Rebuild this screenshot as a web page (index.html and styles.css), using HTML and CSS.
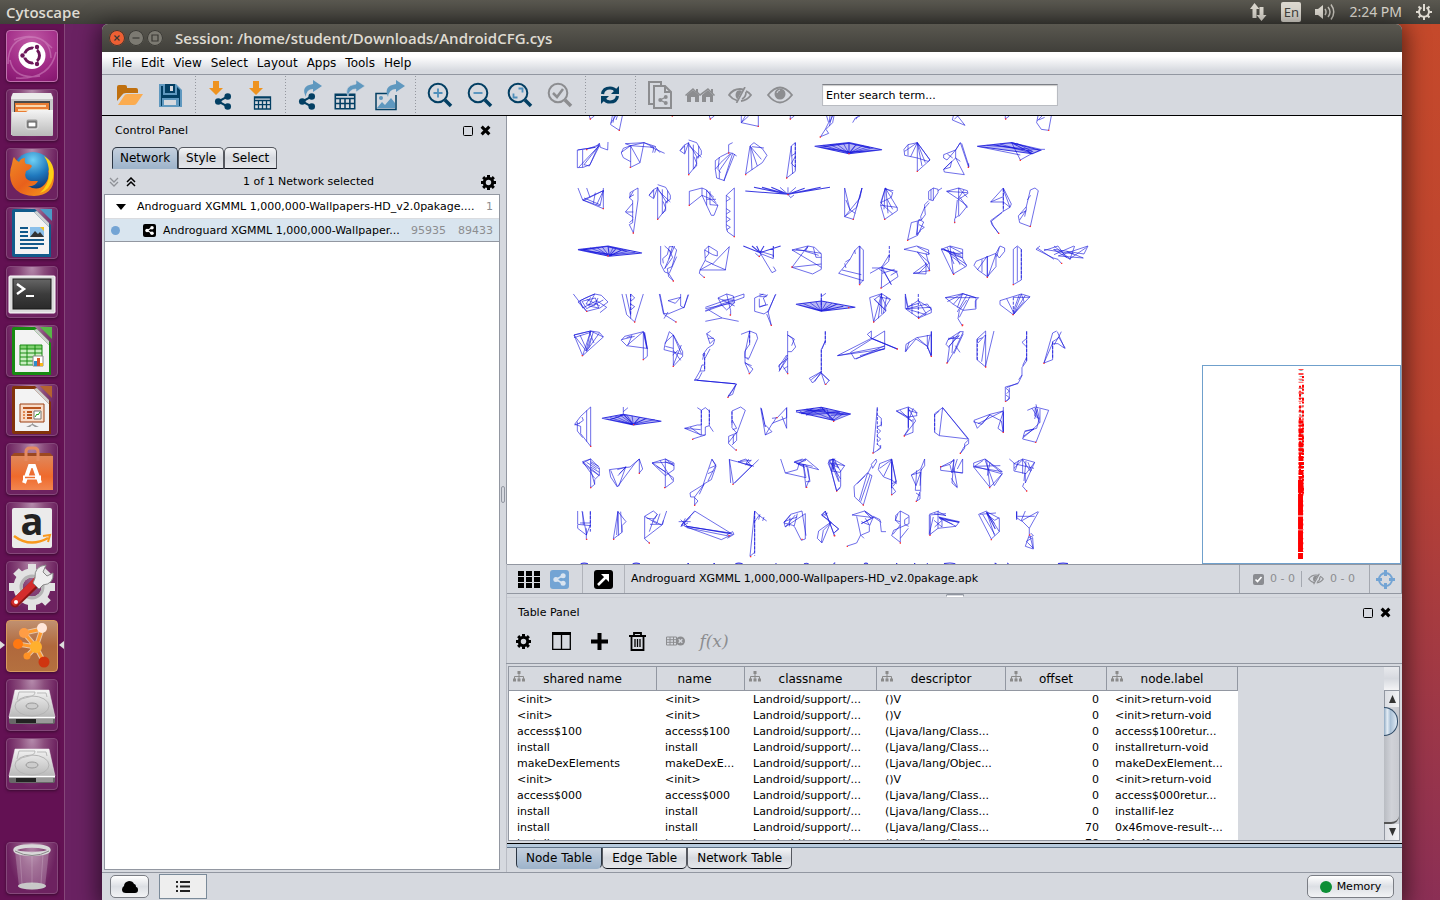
FILE: index.html
```html
<!DOCTYPE html>
<html lang="en">
<head>
<meta charset="utf-8">
<title>Cytoscape</title>
<link rel="stylesheet" href="styles.css">
</head>
<body>
<svg class="defs" aria-hidden="true">
  <defs>
    <linearGradient id="metal" x1="0" y1="0" x2="0" y2="1"><stop offset="0" stop-color="#f4f4f4"/><stop offset="1" stop-color="#b9b9b9"/></linearGradient>
    <linearGradient id="dark" x1="0" y1="0" x2="0" y2="1"><stop offset="0" stop-color="#666"/><stop offset=".5" stop-color="#3c3c3c"/><stop offset="1" stop-color="#2a2a2a"/></linearGradient>
    <radialGradient id="globe" cx=".5" cy=".2" r=".8"><stop offset="0" stop-color="#6fd0f5"/><stop offset=".5" stop-color="#1f78bd"/><stop offset="1" stop-color="#0c2a66"/></radialGradient>
    <linearGradient id="fox" x1="0" y1="0" x2="1" y2="1"><stop offset="0" stop-color="#f08a24"/><stop offset=".5" stop-color="#e8601c"/><stop offset="1" stop-color="#f9a11b"/></linearGradient>
    <linearGradient id="bag" x1="0" y1="0" x2="0" y2="1"><stop offset="0" stop-color="#e0875a"/><stop offset=".6" stop-color="#ef6a2c"/><stop offset="1" stop-color="#f28650"/></linearGradient>
    <symbol id="share" viewBox="0 0 18 18"><path d="M14 3.500L4 9l10 5.500" fill="none" stroke="currentColor" stroke-width="2.200"/><circle cx="14" cy="3.700" r="3.500" fill="currentColor"/><circle cx="4" cy="9" r="3.500" fill="currentColor"/><circle cx="14" cy="14.300" r="3.500" fill="currentColor"/></symbol>
    <symbol id="gear" viewBox="0 0 16 16"><path d="M8 3.500a4.500 4.500 0 1 0 0 9a4.500 4.500 0 1 0 0-9z" fill="none" stroke="currentColor" stroke-width="3.200"/><path d="M8 0v3M8 13v3M0 8h3M13 8h3M2.300 2.300l2.200 2.200M11.500 11.500l2.200 2.200M2.300 13.700l2.200-2.200M11.500 4.500l2.200-2.200" stroke="currentColor" stroke-width="3.200"/></symbol>
    <symbol id="sheet" viewBox="0 0 18 14"><path d="M1 1h16v12H1zM1 4.500h16M1 8.700h16M5 4v9M9 4v9M13 4v9" fill="none" stroke="currentColor" stroke-width="1.300"/><path d="M1 1h16v1.500H1z" fill="currentColor"/></symbol>
    <symbol id="tree" viewBox="0 0 12 11"><path d="M6 2v6M1.500 9V5.500h9V9" fill="none" stroke="#8a8a8a"/><path d="M4.500 0h3v3h-3zM0 7.500h3v3H0zM4.500 7.500h3v3h-3zM9 7.500h3v3H9z" fill="#8a8a8a"/></symbol>
    <symbol id="float" viewBox="0 0 12 12"><rect x="1.500" y="1.500" width="9" height="9" rx="1" fill="none" stroke="#000"/></symbol>
    <symbol id="close" viewBox="0 0 10 10"><path d="M1.500 1.500l7 7M8.500 1.500l-7 7" stroke="#000" stroke-width="2.800"/></symbol>
    <symbol id="eyeoff" viewBox="0 0 24 16"><path d="M9 13.500Q4 12 1 8Q5 2 12 2q2 0 3.500.5M18 4q3 1.500 5 4q-4 5.500-10 6" fill="none" stroke="currentColor" stroke-width="1.800"/><path d="M9 12Q6 8 9 4q3-1.500 5 0L9.500 12z" fill="currentColor"/><path d="M17 0L8.500 16M18 5q0 5-4 7" fill="none" stroke="currentColor" stroke-width="1.700"/></symbol>
    <symbol id="drive" viewBox="0 0 52 52"><path d="M9 11h34l6 27H3z" fill="url(#metal)" stroke="#eee" stroke-width=".5"/><path d="M3 38h46v5q0 2-2 2H5q-2 0-2-2z" fill="#686868"/><path d="M3 38h46v1.500H3z" fill="#fff"/><path d="M10 40h20v4H10z" fill="#222"/><path d="M30 40h17v4H30z" fill="#999"/><ellipse cx="26" cy="27" rx="17" ry="10" fill="none" stroke="#b4b4b4"/><ellipse cx="26" cy="27" rx="6" ry="3" fill="#ccc" stroke="#999"/><path d="M11 21l2-8h16q0 4-6 5q-8 1-12 5M31 14h9l1 4" fill="none" stroke="#b9b9b9"/></symbol>
  </defs>
</svg>

<header class="topbar">
  <span class="app-name">Cytoscape</span>
  <div class="indicators">
    <svg width="18" height="18" viewBox="0 0 18 18"><path d="M5.500 0l5 6H7.500v9h-4V6H1zM12.500 18l-5-6h3V4h4v8h3z" fill="#dfdbd2"/></svg>
    <span class="lang">En</span>
    <svg width="20" height="18" viewBox="0 0 20 18"><path d="M0 6h3l5-4v14l-5-4H0z" fill="#dfdbd2"/><path d="M10 6q2 3 0 6M13 4q4 5 0 10M16 1.500q5.500 7.500 0 15" fill="none" stroke="#c5c2ba" stroke-width="1.500"/></svg>
    <time>2:24 PM</time>
    <svg width="16" height="16" viewBox="0 0 16 16"><path d="M5.500 3.500a5 5 0 1 0 5 0" fill="none" stroke="#dfdbd2" stroke-width="2"/><path d="M8 0v7M0 8h3M13 8h3M8 13v3M2.500 2.500l2 2M13.500 2.500l-2 2M2.500 13.500l2-2M13.500 13.500l-2-2" stroke="#dfdbd2" stroke-width="2"/></svg>
  </div>
</header>

<div class="desktop">
<nav class="launcher" aria-label="Launcher">
  <button class="tile dash" aria-label="Dash"><svg viewBox="0 0 52 52"><path d="M2 34Q2 8 26 7Q44 8 45 28M10 48Q44 50 50 22M8 10Q30 0 46 18M4 30Q8 50 34 46" fill="none" stroke="#d58fc5" stroke-opacity=".5" stroke-width="1.500"/><circle cx="26" cy="25.500" r="13.500" fill="#fff"/><circle cx="26" cy="25.500" r="7.500" fill="none" stroke="#6c1659" stroke-width="3"/><path d="M15 25.500h6M31 16l-3 5M31 35l-3-5" stroke="#fff" stroke-width="4"/><g fill="#6c1659"><circle cx="16.500" cy="25.500" r="2.200"/><circle cx="31" cy="17" r="2.200"/><circle cx="31" cy="34" r="2.200"/></g></svg></button>
  <button class="tile" aria-label="Files"><svg viewBox="0 0 52 52"><path d="M7 4h38l2 4v38H5V8z" fill="#c9c9c9"/><path d="M7 4h38l2 6H5z" fill="#ececec"/><path d="M8 12h36v12H8z" fill="#4a4a4a"/><path d="M9 14h34v10H9z" fill="#e97d33"/><path d="M10 16h30v2H10zM12 20h30v2H12z" fill="#f9d7ae"/><path d="M6 23h14l3-2h24v25q0 1-1 1H7q-1 0-1-1z" fill="url(#metal)"/><rect x="20" y="30" width="12" height="10" rx="2" fill="#999" stroke="#e5e5e5"/><rect x="22" y="33" width="8" height="5" fill="#fff" stroke="#555"/></svg></button>
  <button class="tile" aria-label="Firefox"><svg viewBox="0 0 52 52"><circle cx="27" cy="24" r="20" fill="url(#globe)"/><path d="M6 16q1-6 2-7q2 4 5 5q2-4 6-4q-1 4 1 6q5 0 6 2q-2 4-6 5q-3 8 5 10q5 0 7 0q-3 6-10 5q10 6 17-2q5-6 3-14q3 2 3 5q1-10-4-14q8 5 7 16q0 18-20 19Q5 47 4 27q0-6 2-11z" fill="url(#fox)"/><path d="M38 8q12 7 9 22q-3 12-13 15q9-8 9-20q0-10-5-17z" fill="#fcd116"/></svg></button>
  <button class="tile" aria-label="Writer"><svg viewBox="0 0 52 52"><path d="M8 2h21l16 16v32H8q-2 0-2-2V4q0-2 2-2z" fill="#125b8b"/><path d="M9 5h19l15 15v27H9z" fill="#f3f3f3"/><path d="M28 5l15 15v-4L31 4z" fill="#d2d2d2"/><path d="M34 2h12v12z" fill="#4c9ac6"/><path d="M14 21h8M14 25h8M14 29h8M14 33h24M14 37h24M14 41h18" stroke="#12598a" stroke-width="2"/><path d="M24 20h14v10H24z" fill="#8cc0ea"/><path d="M24 30l5-6 3 3 2-2 4 5z" fill="#333"/><path d="M34 20h4v4z" fill="#f4c41d"/></svg></button>
  <button class="tile" aria-label="Terminal"><svg viewBox="0 0 52 52"><rect x="3" y="10" width="46" height="37" rx="1" fill="#dcdcdc" stroke="#fff"/><rect x="7" y="13" width="38" height="30" fill="url(#dark)" stroke="#1a1a1a"/><path d="M11 18l7 5-7 5" fill="none" stroke="#fff" stroke-width="2.500"/><path d="M20 30h8" stroke="#fff" stroke-width="2"/></svg></button>
  <button class="tile" aria-label="Calc"><svg viewBox="0 0 52 52"><path d="M8 2h21l16 16v32H8q-2 0-2-2V4q0-2 2-2z" fill="#188a12"/><path d="M9 5h19l15 15v27H9z" fill="#f3f3f3"/><path d="M28 5l15 15v-4L31 4z" fill="#d2d2d2"/><path d="M34 2h12v12z" fill="#58b648"/><path d="M14 20h22v20H14z" fill="#c8eec0"/><path d="M14 20h22v4H14z" fill="#7fd06f"/><path d="M14 20h22v20H14zM14 24h22M14 28h22M14 32h22M14 36h22M21 20v20M29 20v20" fill="none" stroke="#188a12"/><path d="M27 31h10v10H27z" fill="#fff" stroke="#888"/><path d="M28 36h3v5h-3z" fill="#2d8ccb"/><path d="M31 33h3v8h-3z" fill="#d8582a"/><path d="M34 38h3v3h-3z" fill="#f6b81b"/></svg></button>
  <button class="tile" aria-label="Impress"><svg viewBox="0 0 52 52"><path d="M8 2h21l16 16v32H8q-2 0-2-2V4q0-2 2-2z" fill="#82330a"/><path d="M9 5h19l15 15v27H9z" fill="#f3f3f3"/><path d="M28 5l15 15v-4L31 4z" fill="#d2d2d2"/><path d="M34 2h12v12z" fill="#b46330"/><path d="M14 20h24v18H14z" fill="#f8dcc9" stroke="#9c3f10"/><path d="M17 24h18M21 28h5M21 31h5M21 34h5" stroke="#b8541e" stroke-width="2"/><path d="M17 28h2M17 31h2M17 34h2" stroke="#e08850" stroke-width="2"/><path d="M28 27h7v8h-7z" fill="#fff" stroke="#777"/><path d="M29 33l2-3 1 1 2-3" fill="none" stroke="#21a121"/><path d="M26 38v2l-6 3h4l2-2 3 2h4l-6-3z" fill="#999"/></svg></button>
  <button class="tile" aria-label="Software Center"><svg viewBox="0 0 52 52"><path d="M5 13l3-3h36l3 3z" fill="#9c4820"/><path d="M5 13h42v34H5z" fill="url(#bag)"/><path d="M20 18V9q0-4 4-4h4q4 0 4 4v9" fill="none" stroke="#e58a61" stroke-width="3"/><path d="M18 40l6-17h4l6 17M17 34.500h18" fill="none" stroke="#fff" stroke-width="4"/><path d="M19 34.500h10" stroke="#f07030" stroke-width="1.500"/></svg></button>
  <button class="tile" aria-label="Amazon"><svg viewBox="0 0 52 52"><rect x="6" y="6" width="40" height="40" rx="2" fill="#ebebeb"/><text x="26" y="33" class="amazon" text-anchor="middle">a</text><path d="M8 34q16 12 34 2" fill="none" stroke="#f8981d" stroke-width="2.500"/><path d="M37 34l7-1-2 7" fill="none" stroke="#f8981d" stroke-width="2"/></svg></button>
  <button class="tile" aria-label="System Settings"><svg viewBox="0 0 52 52"><circle cx="26" cy="26" r="14" fill="none" stroke="#e2e2e2" stroke-width="9"/><path d="M26 3v6M26 43v6M3 26h6M43 26h6M10 10l5 5M37 37l5 5M10 42l5-5M37 15l5-5" stroke="#e2e2e2" stroke-width="8"/><circle cx="26" cy="26" r="11" fill="none" stroke="#b4b4b4" stroke-width="3"/><path d="M9 42L33 19" stroke="#8c1515" stroke-width="9" stroke-linecap="round"/><path d="M9 41L32 18" stroke="#d42c2c" stroke-width="7" stroke-linecap="round"/><path d="M29 17q-1-12 11-13l-3 7 4 4 6-3q1 11-10 12l-4 4-6-6z" fill="#eee" stroke="#888"/><circle cx="10" cy="41" r="2" fill="#fff"/></svg></button>
  <button class="tile active" aria-label="Cytoscape"><svg viewBox="0 0 52 52"><g stroke="#e7c6a8" stroke-width="5" fill="none"><path d="M18 13L30 27 36 9zM12 24L30 27 38 42M30 27L21 36"/></g><path d="M18 13L30 27 36 9zM12 24L30 27 38 42M30 27L21 36" fill="none" stroke="#ff9a2e" stroke-width="3"/><circle cx="36" cy="8" r="5" fill="#ffe6da"/><circle cx="18" cy="13" r="5" fill="#ff9d45"/><circle cx="12" cy="24" r="5" fill="#ff7812"/><circle cx="30" cy="27" r="6" fill="#ffb02e"/><circle cx="21" cy="36" r="3.500" fill="#ff9226"/><circle cx="38" cy="42" r="5.500" fill="#cf3510"/></svg></button>
  <button class="tile" aria-label="Volume 1"><svg><use href="#drive"/></svg></button>
  <button class="tile" aria-label="Volume 2"><svg><use href="#drive"/></svg></button>
  <button class="tile trash" aria-label="Trash"><svg viewBox="0 0 52 52"><path d="M9 9l4 36q13 5 26 0l4-36z" fill="#fff" fill-opacity=".22"/><ellipse cx="26" cy="44" rx="14" ry="3.500" fill="#c8c8c8"/><path d="M14 12l2 30M26 14v28M37 12l-2 30" stroke="#fff" stroke-opacity=".18"/><ellipse cx="26" cy="8" rx="17" ry="4" fill="none" stroke="#d9d9d9" stroke-width="3.500"/><path d="M9 9q17 9 34 0" fill="none" stroke="#888"/></svg></button>
</nav>

<div class="window">
  <div class="titlebar">
    <button class="wb wb-close" aria-label="Close"><svg viewBox="0 0 16 16"><path d="M5.500 5.500l5 5M10.500 5.500l-5 5"/></svg></button>
    <button class="wb" aria-label="Minimize"><svg viewBox="0 0 16 16"><path d="M4.500 8h7"/></svg></button>
    <button class="wb" aria-label="Maximize"><svg viewBox="0 0 16 16"><path d="M5 5h6v6H5z"/></svg></button>
    <h1>Session: /home/student/Downloads/AndroidCFG.cys</h1>
  </div>
  <nav class="menubar" aria-label="Menu">
    <button>File</button><button>Edit</button><button>View</button><button>Select</button><button>Layout</button><button>Apps</button><button>Tools</button><button>Help</button>
  </nav>
  <div class="toolbar">
    <button aria-label="Open"><svg viewBox="0 0 40 40"><path d="M7 26V12q0-2 2-2h6q2 0 2 2v1h9q2 0 2 2v3H16q-3 0-4 2z" fill="#c0700f"/><path d="M8 30l6-9q1-2 3-2h16l-6 9q-1 2-3 2z" fill="#fbac50"/></svg></button>
    <button aria-label="Save"><svg viewBox="0 0 40 40"><path d="M9 9h17l6 6v17H9z" fill="#5f98bf"/><path d="M11 11h2v9h14v-8l3 3v16h-1v-8H12v8h-1z" fill="#033f63"/><path d="M15 9h10v9H15z" fill="#033f63"/><path d="M20 11h3v5h-3z" fill="#d6d9df"/><path d="M14 25h12v5H14z" fill="#d6d9df"/></svg></button>
    <i class="sep"></i>
    <button class="navy" aria-label="Import Network"><svg viewBox="0 0 40 40"><path d="M13 6h6v7h4l-7 7-7-7h4z" fill="#ee931f"/><use href="#share" x="14" y="18" width="18" height="17"/></svg></button>
    <button class="navy" aria-label="Import Table"><svg viewBox="0 0 40 40"><path d="M13 6h6v7h4l-7 7-7-7h4z" fill="#ee931f"/><use href="#sheet" x="13" y="21" width="19" height="14"/></svg></button>
    <i class="sep"></i>
    <button class="navy" aria-label="Export Network"><svg viewBox="0 0 40 40"><use href="#share" x="8" y="18" width="18" height="17"/><path d="M16 22q-6-11 7-13V5l9 6-9 6v-3q-7 0-7 8z" fill="#5f98bf"/></svg></button>
    <button class="navy" aria-label="Export Table"><svg viewBox="0 0 40 40"><use href="#sheet" x="4" y="18" width="22" height="17"/><path d="M18 22q-5-11 8-13V5l9 6-9 6v-3q-7 0-8 8z" fill="#5f98bf" stroke="#d6d9df" stroke-width=".6"/></svg></button>
    <button class="navy" aria-label="Export Image"><svg viewBox="0 0 40 40"><path d="M17 18.500H6v16h20V20" fill="none" stroke="#033f63" stroke-width="1.500"/><path d="M7 33l5-6 3 3 6-7 4 5v5z" fill="#5f98bf"/><circle cx="11" cy="23" r="2" fill="#5f98bf"/><path d="M18 22q-5-11 8-13V5l9 6-9 6v-3q-7 0-8 8z" fill="#5f98bf"/></svg></button>
    <i class="sep"></i>
    <button class="navy" aria-label="Zoom In"><svg viewBox="0 0 40 40"><circle cx="18" cy="18" r="9.300" class="lens"/><path d="M25 25l6 6" class="handle"/><path d="M18 13.500v9M13.500 18h9" stroke="#4f8fbb" stroke-width="1.800"/></svg></button>
    <button class="navy" aria-label="Zoom Out"><svg viewBox="0 0 40 40"><circle cx="18" cy="18" r="9.300" class="lens"/><path d="M25 25l6 6" class="handle"/><path d="M13.500 18h9" stroke="#4f8fbb" stroke-width="1.800"/></svg></button>
    <button class="navy" aria-label="Fit Content"><svg viewBox="0 0 40 40"><circle cx="18" cy="18" r="9.300" class="lens"/><path d="M25 25l6 6" class="handle"/><path d="M18.500 13.500h4v4M17.500 22.500h-4v-4" fill="none" stroke="#4f8fbb" stroke-width="1.800"/></svg></button>
    <button class="gray" aria-label="Fit Selected"><svg viewBox="0 0 40 40"><circle cx="18" cy="18" r="9.300" class="lens"/><path d="M25 25l6 6" class="handle"/><path d="M13 18l4 4 6-8" fill="none" stroke="currentColor" stroke-width="2.500"/></svg></button>
    <i class="sep"></i>
    <button class="navy" aria-label="Refresh"><svg viewBox="0 0 40 40"><path d="M12.500 19q1-6 7.500-6 4 0 6 3M27.500 21q-1 6-7.500 6-4 0-6-3" fill="none" stroke="currentColor" stroke-width="3.200"/><path d="M29 11v8h-8zM11 29v-8h8z" fill="currentColor"/></svg></button>
    <i class="sep"></i>
    <button class="gray" aria-label="New Network"><svg viewBox="0 0 40 40"><path d="M14 29H9V7h12v3" fill="none" stroke="currentColor" stroke-width="2"/><path d="M14 11h11l6 6v16H14zM25 11v6h6" fill="none" stroke="currentColor" stroke-width="2"/><use href="#share" x="18" y="20" width="10" height="10"/></svg></button>
    <button class="gray" aria-label="First Neighbors"><svg viewBox="0 0 40 40"><path d="M5 20l8-7 3 3v-2h2v3l2 2 8-6 3 3v-2h2v4l2 2-1 1-6-6-8 6-7-6-7 6z" fill="currentColor"/><path d="M7 20l6-5 6 5v7h-4v-5h-4v5H7zM22 20l6-5 5 5v7h-3v-5h-4v5h-4z" fill="currentColor"/></svg></button>
    <button class="gray" aria-label="Hide Selected"><svg viewBox="0 0 40 40"><use href="#eyeoff" x="8" y="12" width="24" height="16"/></svg></button>
    <button class="gray" aria-label="Show All"><svg viewBox="0 0 40 40"><path d="M8 20q12-15 24 0q-12 15-24 0z" fill="none" stroke="currentColor" stroke-width="1.800"/><circle cx="20" cy="19" r="5.500" fill="currentColor"/><path d="M17 18q0-2 3-3" stroke="#d6d9df" fill="none"/></svg></button>
    <input class="search" type="text" value="Enter search term..." aria-label="Search">
  </div>

  <div class="work">
    <section class="control">
      <div class="panel-head"><h2>Control Panel</h2><button aria-label="Float"><svg width="12" height="12"><use href="#float"/></svg></button><button aria-label="Close panel"><svg width="11" height="11"><use href="#close"/></svg></button></div>
      <div class="tabs"><button class="on">Network</button><button>Style</button><button>Select</button></div>
      <div class="selbar">
        <button aria-label="Expand all"><svg width="10" height="10" viewBox="0 0 10 10"><path d="M1 1l4 4 4-4M1 5l4 4 4-4" fill="none" stroke="#8f9197" stroke-width="1.300"/></svg></button>
        <button aria-label="Collapse all"><svg width="10" height="10" viewBox="0 0 10 10"><path d="M1 5l4-4 4 4M1 9l4-4 4 4" fill="none" stroke="#000" stroke-width="1.500"/></svg></button>
        <span>1 of 1 Network selected</span>
        <button aria-label="Options"><svg width="15" height="15"><use href="#gear"/></svg></button>
      </div>
      <div class="nets">
        <div class="net root"><svg width="12" height="6" viewBox="0 0 12 6"><path d="M1 0h10L6 6z"/></svg><span class="nm">Androguard XGMML 1,000,000-Wallpapers-HD_v2.0pakage....</span><span class="ct">1</span></div>
        <div class="net child"><i class="dot"></i><svg width="13" height="13" viewBox="0 0 13 13"><rect width="13" height="13" rx="2"/><use href="#share" x="2" y="2" width="9" height="9" color="#fff"/></svg><span class="nm">Androguard XGMML 1,000,000-Wallpaper...</span><span class="ct">95935</span><span class="ct">89433</span></div>
      </div>
    </section>
    <div class="vsplit"><i></i></div>
    <section class="main">
      <div class="canvas">
        <svg class="graph" aria-label="Network view">
          <g transform="translate(53 -6) scale(.3333)">
            <path class="w" d="M54 419l90-11 102 21-98 10zM708 583l76-10 102 19-102 12z"/>
            <path class="e" d="M88 18l3 9 12-9M157 18l-5 26 26 17 9-43M152 40l15-22M163 18l-4 20M172 18l-4 12M448 18l3 9 12-9M544 18v20l51 11V18M544 38l22-20M556 18l-12 20M691 18v9l12-9M800 18l6 20-10 20-14 22 24-10-8-12 20-20 4-20M810 18l-2 18M818 18l-10 20"/>
            <path class="e" d="M118 100l-12 12-54 8v53l18-1 20-8 28-64M118 106L56 172M54 120l52-8M68 120v52M118 106l-46 58 16 4 30-60M118 100l3 12 22 8 1-24M80 118l38-14"/>
            <path class="e" d="M252 98l-40 9-22 8-6 14 6 14 22 12M212 107v64M212 107l-28 20M212 107l-16-6 56-3 36 12M252 98l-12 60-28-50M240 158l-28 14M252 98l30 14-70-5M282 112l-4 16M288 116l-4 12M270 110l44 20M284 110l16 18"/>
            <g id="umbrella"><path class="e" d="M386 98l-14 8-12 16 14 10 12-34v96l16-20 8-6v-26l14-8v-12l-14-24-24-8M386 106l38 36M386 100l28 46M400 104v74M402 140l8 20-8 16M416 108v36M360 122l14-14M374 106v24"/><path class="r" d="M384 194h4"/></g>
            <use href="#umbrella" x="-93" y="134"/>
            <path class="e" d="M518 98l-12 6v24l12 2 12 8M506 128l-24 12-16 12v26l16-20 28-26M466 178l4 26 24 8M518 130l-26 82M514 130l-36 52v24M478 142l-4 36 8 10M524 132l-32 80"/>
            <path class="e" d="M582 98l-12 10-13 84 50-34 14-22-14-20-25-18M570 108l34 40M572 110l4 70M572 110l20 58M576 110l36 4M706 98l-12 10-14 96 26-20V98M694 108l4 84M694 138l12-8M694 160l12 12M706 140l-12 20"/>
            <path class="e" d="M54 234l14 36 62 26v-54M80 234l10 28 40-20M68 270l62-28M90 262l-20 10M68 270l52 18 10-46M110 284l20-42M100 280l6-32M72 264l48 20M130 234v10"/>
            <path class="e" d="M234 234v36l-14 100M234 234l-24 14v14M220 244l-12 20 10 8v66l-10 6 12 24M218 280l-22 26 24 16M198 306h22M208 338l12-10M208 262l14-8"/>
            <path class="e" d="M426 234l-38 10v42l38-30 24 10 24 20-12 30h-8l-28-60v-22l14 6 28 38M440 240v46M440 268h28M450 244v40l24 2M462 262l-22-20M523 234v146l-20-14-4-14v-96l24-22M499 256l12 10-12 8M499 296l12 8-12 8M499 320l12 8-12 8M499 344l12 8-12 8"/>
            <path class="e t" d="M556 243l128 10 126-21M582 232l102 21M606 232l78 21M634 232l50 21 98-21M684 253l50-18"/>
            <path class="e" d="M660 232l24 21 24-21M684 232v21l8 10 10-8"/>
            <path class="e t" d="M54 419l90-11 102 21-98 10zM54 419l94 14M144 408l4 30M170 414l-22 24M190 418l-42 20M64 421l80-12M200 424l-56-14"/>
            <path class="e" d="M70 418l74 18M90 414l54 20M110 412l34 24M126 410l20 26M160 412l-12 24M210 422l-62 14M226 427l-78 8"/>
            <path class="e" d="M302 408v54l12 24 12 4 14 22-14-12-4-24 14-6 14-50-10-10h-12l-6 24-14 12 2 14M326 418l12 24-24 34M338 408l-12 40M350 440l-22 50M314 476l30-68M314 408l22 20M446 408l-12 12 24 14 14 4v-14l-26-16M434 420l2 30-16 30 76 0 12-70-50 52-22-10M456 462l42 18M456 460l-36 20-2 10 14 12M446 408v24l-10 12"/>
            <path class="e t" d="M550 408l50 20 62-20M590 408l10 20 12-20M576 408l24 20M640 408v34"/>
            <path class="e" d="M600 428l36 60 12-6-8-12M600 424l40 12v10l-40-16M586 430l12 10 6-8M744 408l-48 12 88 52M784 432l-20-20-20-4-48 64 62 20 26-14v-46M696 472l88-10M696 420l36 2 12-12M708 418l76 12M744 410l-8 14 40 12M760 412l8 30h16"/>
            <path class="e" d="M40 552l40 52 40-10 24-18-20-20-20-4-44 20 8 22 42-22 30 20-20 16M104 552l-28 12-22 12 26 28M80 568l40 20M104 552l-18 36 30 6-10-30-40 10 14 22 50-26M92 562l-14 20 26 4 10-22M186 552l14 62 24 22 26-84M198 552l14 64M212 552v74M212 552l12 12-12 10M212 582l12 8-12 10"/>
            <path class="e" d="M298 552l12 58 14 2 48-20 14-38M300 552l12 60M362 552v36l10 6 12-40M362 562l-38 10 22 8 16-18M310 612l38 24M324 606l-12 20M436 604l116-42v-10l-116 40M436 596l88-18M436 602l50-20M446 600l40 24 50 10M436 634l50-10M500 552l-26 12 12 22 14 14 24-22-4-20-20-6M500 552l12 50v14M486 570h36l-36 12M474 564l50 24"/>
            <path class="e" d="M610 552l-26 12v40l28 8 12-8M624 554l-14 10 8 20-20 8M598 560h22M598 566v24l26-6M598 552l22 4M648 552l-24 52 10 42-14-34M646 554l-22 54"/>
            <path class="e t" d="M708 583l76-10 102 19-102 12zM708 583l72 18M784 573v30M784 603l46-20M784 603l66-14"/>
            <path class="e" d="M784 551v22M784 560l14-10M730 581l54 22M750 578l34 25M768 576l16 27M800 576l-16 27M816 580l-32 23"/>
            <path class="d" d="M706 98v80M212 552v60M784 551v40"/>
            <path class="r" d="M89 27h4M176 61h4M335 18h4M449 27h4M593 49h4M689 27h4M779 81h4M78 119h4M209 172h4M504 129h4M555 194h4M678 204h4M128 296h4M218 369h4M386 286h4M521 380h4M682 254h4M142 438h4M338 513h4M431 502h4M596 439h4M694 471h4M78 604h4M222 636h4M346 636h4M509 615h4M632 646h4"/>
          </g>
          <g transform="translate(313 -6) scale(.3333)">
            <path class="w" d="M-16 109L87 98l99 21-99 12zM472 109l103-11 86 23-24 10z"/>
            <path class="e" d="M98 38l8-14 14-6M112 20l-4 8M400 18l-3 12 38 16-22-28M403 28l10-10M556 18v9l12-9M654 18l-4 20 14 20 22 3 8-43M666 18l-14 14M674 22l-18 8M36 18l-8 30"/>
            <path class="e t" d="M-16 109L87 98l99 21-99 12zM-16 109l103 16M87 98v32M110 102l-23 28M186 119l-99 8M0 112l87-12M150 114l-63-14"/>
            <path class="e" d="M10 106l77 24M30 104l57 26M50 102l37 28M70 100l17 30M130 106l-43 24M145 110l-58 20M160 114l-73 15"/>
            <path class="e" d="M292 98l-28 6-12 14 2 18 38 8 32 10 6-4-38-52v86l38-34-38-52M292 98l14 70M292 98l24 60M264 104v32M292 98l-20 42M292 98l-38 26M421 98l-14 22-36 14v10l10 6 26-30 14-22 25 74M425 100l22 70M407 120v24l-36 34 2 8 60 8-26-50M382 132l16 12M371 178l24-24-4 18zM421 154l-14-10M446 160v12"/>
            <path class="e t" d="M472 109l103-11 86 23-24 10zM575 98l62 33M472 109l165 22M520 104l117 20"/>
            <path class="e" d="M575 98l87 20h13M500 106l164 14M540 102l96 28M575 98l26 52 36-20M472 109l129 26M590 100l50 26"/>
            <path class="e" d="M74 234v86l26 8 26-94-6 30-46 56M126 234l-16 58-36 28M74 234l16 66 16 10M78 270l12 30M196 234l-14 52 12 42 38-26v-8l-36-60 22 14-4 14-12 6M182 286l50 6M196 234l-4 64M198 236l6 74M182 278l36 34M196 234l-14 44 20-10 16 30M196 238l24 4"/>
            <path class="e" d="M340 234l-14 10v24l12 4 16-24v-10l-14-4M340 234v38M333 238v32M354 242l12-8M326 272l-12 12v10l14-16M314 292l-12 28 2 10 12-16zM304 330l-30 8-11 52 30-14 18-40-14-8-8 46 14-12M292 334v42M297 344l16 8-14 10"/>
            <path class="e" d="M416 234l-36 10 36 24 28-18-2-8-26-8v82l-12 10v14M416 234l26 28M380 244l62 4M412 270l-6 54M416 268l26 20-26 32M420 262l22 32M432 240l-16 24M550 234l-38 42h38l20 16 4-10-24-48v70l20-12M550 238l20 54M550 260l-38 16M550 304l-38 28 4 12 20 26-16-22-6-14 32-26M645 234l-14 6-12 50-24 28 4 20 32 12 24-108-10-8M622 270l10-14M619 290v10l-20 30M600 312l18-10-4 18"/>
            <path class="e" d="M118 408l-14 14-14 26-12 16-22 26 74 22v-92l-12-12v116M120 408v112M130 510l-12 14M104 420l2 12M90 448l-14 8M74 460l4 14M66 480l58 14M208 434l-22 36-36 20M208 434l-2 20-22 20h-28M186 470l-2 64 50-34-4-14-44-14 28 52-22-38-14-8M184 474l48 10-20 12M186 490l38-12M290 408l-38 10 40 8 34 8v-14zM292 410l38 22M292 426l36 32v24l-48 8 38-28-26-36M330 482l-14-24M318 458v34l-38-2M326 460l-30 30M318 430l8 30"/>
            <path class="e" d="M390 408l-26 10 44 12h20v-12zM364 418l36 75M390 408l10 84 40-24-14-26-54-24 68 46M390 410l38 20v14l-40-14M364 416l60 20M400 424l20 40M396 440l40 30M382 412l20 50M540 408l-12 22 10 14 16-20v-10l-14-6M528 430l-60 24-6 12 12 14 28 20v-62M502 440v60l26-30v-38M528 432l-24 68M472 480l30-42M486 448v38M538 412l-8 28M592 408l-12 10v106l24-14v-92l-12-10M592 410v104"/>
            <path class="e" d="M660 408l-12 10 52 26 14 4 10 12M652 414l50 34M672 418l90 14M714 408l-42 14M762 408l-60 26M702 408l50 40M764 408l-14 40-50-30M714 408l26 36M714 438l90-30-12 24-90-14M740 424l50 20-74-6M800 412l-50 34"/>
            <path class="e" d="M185 551l-36 12 12 73 36-32v-14l14-22-26-17zM185 551l-22 18 34 32M162 566l36 36M185 551l-24 84M185 552v60M185 560l14 30M200 560l-10 50M176 560l36 8M185 551l-10 74M256 552v44l40 28 38-16v-12l-40-24-36 24 76-4M256 560l6 30 34-10M262 596l60-14 12 16-40 26M276 580v32M258 596l60 18M295 572l24 40M264 592l-8-40"/>
            <path class="e" d="M428 551l-52 12 24 20 30 18 38-4v-34zM428 551l-28 32M428 551l-16 42M376 563h100l-10 10v20M428 551l38 12M428 551l-46 24M440 570l-22 32-4 24 12 20M450 560l-32 62M440 556l-28 50M604 552l-64 20v12l40 30 50-54zM604 552l-24 62M604 552l8 22-32 40M616 556l-36 58M580 562h50M598 554l-18 50M560 566l20 40"/>
            <path class="d" d="M208 408v40M604 418v92M295 552v72M580 562v52M550 236v60"/>
            <path class="r" d="M555 27h4M684 61h4M85 131h4M290 184h4M443 172h4M599 151h4M98 328h4M192 328h4M261 391h4M402 337h4M534 370h4M629 349h4M117 524h4M181 534h4M326 482h4M399 493h4M500 502h4M578 524h4M723 460h4M84 593h4M159 636h4M294 625h4M425 647h4M577 614h4"/>
          </g>
          <g transform="translate(53 209) scale(.3333)">
            <path class="w" d="M126 280l64-12 114 21-84 11zM708 257l76-10 88 20-52 20z"/>
            <path class="e" d="M92 18l-50 12 26 62 62-56-12-14zM92 18l-24 74M92 18l-14 60M42 30l50-12 38 18M42 30l38 50M92 22l-50 16M60 30l20 44M92 40l-12 38M88 20l14 34M100 20l-14 50M118 24l-38 54M250 20l-56 14-10 12 16 16 60 8-10-50v84l12-10V72l-8-50M184 44l40-10M250 20l-50 42M200 38l16-6-12 28"/>
            <path class="e" d="M328 20l12 10v94l28-30v-14l-28-50-24 22-4 22 54 14M340 70l-24-6M340 30l24 56M340 120l24-60M328 20l-12 36M340 76l22 30M338 90l16-14M452 18l-12 8 24 18-4 14-18 12-14 20 8 8 14-26M440 26l10 30 12-12M444 40h18M432 84l-4 20M434 98v40h-14l6-18M426 120h8M420 138l-16 28 12-4 10-20M402 165l128 12-14 22-12 18M528 178l-10 30-14 6 14-20z"/>
            <path class="e t" d="M410 166l116 10M252 22l10 50"/>
            <path class="e" d="M543 28l26-10 20 8 4 14-26 60-12-2v-20l14-20v-40M569 18l-14 66v30l14 32 10-14-24-20M555 114l20 8M560 100l6 4M683 18v62h12l12-14-10-26-14-10M683 30l20 12-8 20M683 80v66l-14-22M683 100l-26 20 2 16zM680 90l-24 36M683 90l-26 50M683 124l-12 8M796 18v30l-12 26v66l-36 20 10 14 26-30 24 22-12 14-12-36M784 144l24 24M784 140l-30 24M784 140l-20 30M796 48l-10 24"/>
            <path class="e" d="M92 246l-30 28-18 24 18 6v22l30 38zM80 256v94M66 276l4 10-14 10M44 300l16-6M52 290v28l16 20M190 246v22M190 260l14-12"/>
            <path class="e t" d="M126 280l64-12 114 21-84 11zM126 280l94 18M190 268l30 30M240 276l-20 22M260 280l-40 18M190 270l-40 14"/>
            <path class="e" d="M150 278l66 20M166 274l50 24M180 270l38 28M200 270l20 28M216 272l4 26M284 284l-64 14"/>
            <path class="e" d="M412 248l12 8v44h-12l-38 10 50 20h12l-38 12M424 300v30M424 256l12-8 12 10v44l12 18M436 330v-24l12-4M374 310l48 4M390 306l32 24M542 246l-26 12v50l14 16-24 10v22l22 20M542 246l14 10-26 70v20l-14 14M516 284l14 26-12 4M530 322l-24 30M520 330v26M602 248l14 82 22-36 42-16v-30M616 300l20 20-20 10M636 280l16-2M652 278l28-30v62l-14-36M638 296l12-20"/>
            <path class="e t" d="M604 250l12 56M708 257l76-10 88 20-60 4M784 247l38 40M708 260l112 26M730 254l132 14"/>
            <path class="e" d="M718 256l12 10 70-14M740 252l84 34M760 250l-36 16 116-4M800 250l10 30M750 254l86 6-20 24M784 250l-46 20 86-6M850 266l-30 20M718 264l76-12M872 267l-50 20"/>
            <path class="e" d="M92 402l-24 12 24 20 26 18v-24zM92 402v86l12-10v-14l14-14M92 410l24 14M68 410l36 50M92 402l-24 8 48 40M92 414l26 18M92 426l26 16M80 412l30 20M92 434l12 44M238 402l-28 24-62 8 4 22 20 30 52-70 14-14v42l10-12-10-30M172 434l26-8-24 26M198 424l-22 60M178 446l20-20M152 436l20 48M316 402l-40 12 40 38 26-18v-20zM316 402v86l24-18v-12l-62-44M316 402l26 20M276 414l40-2 24 4M316 410l26 12M300 406l38 60M316 440l-26-16"/>
            <path class="e" d="M456 402l-14 40-12 36 24-14 14-40zM456 404l12 16-24 48M448 430l18-8M444 446l16-8M432 478l-42 26 2 12h12zM404 516v24l10-12-10-10M432 478l-14 30M508 402l12 75 76-73M508 404l68 18-52 52M540 408l18-6 16 22-40-14 40-4-18 14M566 402l-8 14 24 8M508 404l4 70"/>
            <path class="e" d="M662 402l14 42 62 14-8-40 8 70 10-24-8-44M676 444l36-10 6-20 20-12-36 10 56 12M738 402l38 32-62-16M728 402l-24 8 30 18M738 420l-28-4 28-10M744 430l6 40h-12M806 406l16-4 14 26-26-12M806 408l24 90 12-10M826 402l-18 4 34 56M818 410l20 60"/>
            <path class="e" d="M53 558v40l38 4v-44M66 558l14 72M53 600v10l26 20v14M60 594h30M91 600l-12 30v-20M68 560l2 40M174 558l-14 84 26-20-4-62M174 560l-4 70M174 560l24 30-12 12v20M174 560l2 72M254 574v68l14 12M254 574l26-16 12 10-8 14-24-2M254 574l36 22 10-30M254 640l52-40 14-42M292 568l-14 18 26 14M280 586l-12 34M310 586l-2 12h-38"/>
            <path class="e" d="M404 558l-30 34v12l110 40 34-16-114-70M404 560l-40 40M376 604l136 20M380 608l130 26M356 590h36M362 584l20 20M376 580l-12 24 20-10M392 576l-30 28M500 630l18-10 4 8-20 12"/>
            <path class="e t" d="M380 604l132 22"/>
            <path class="e" d="M584 558l-14 136 14-12V558l14 14 22 16M598 570l-14 20M600 568l-4 16M612 576l-4 12M726 558l-34 10-20 24 4 14 60-40v76l-12 4-20-40M726 558l12 74M692 570l-20 24 30 8M672 590l40-14M676 606l30-36M690 578l-2 26M712 566l-10 40M796 558l-12 12 28 22-36 26-4 22 14 14 26-62M796 558l28 76M786 572l16-8-8 10M812 592l24 20-12 10"/>
            <path class="d" d="M796 20v40M784 74v70M584 560v132M448 254v44M424 256v44M91 560v60M516 260v40M434 84v50M569 18v40"/>
            <path class="e t" d="M62 716q10-3 22 0M218 716q10-3 22 0M526 716q10-3 22 0M732 716q8-2 14 0M382 716h5M460 716h5M648 714v4M822 714h4"/>
            <path class="r" d="M65 92h4M248 104h4M338 124h4M502 217h4M566 146h4M681 146h4M795 178h4M90 364h4M219 299h4M396 343h4M527 375h4M649 278h4M819 289h4M90 488h4M236 445h4M312 488h4M402 541h4M517 478h4M738 487h4M828 498h4M78 643h4M159 643h4M266 654h4M505 632h4M570 695h4M724 643h4M821 632h4"/>
          </g>
          <g transform="translate(313 209) scale(.3333)">
            <path class="e" d="M154 18l-12 10 12 12 78 32M154 40l-102 52 142-20V18L92 82l12 20 90-32M108 102l86-40M120 92l74-20M154 18v22M54 92l40-8 100-20"/>
            <path class="e" d="M334 30l-44 8-32 20-2 22 32-38 34 22 12 30V18M334 94l-12-30V30M258 80l10-30M292 38l30 26M330 32l-8 40M420 20l-36 24-6 14 10 10-6 46 22-38 26-56zM430 26l-28 60M384 44l34-12-32 32M420 20l-34 48M400 34l-4 50M406 62l14 20M384 40h36"/>
            <path class="e" d="M497 18l-26 24v62l26 22V18M522 18l-26 108M497 30l-12 80M472 44l16-6M474 54l22-24M620 18v90l-14 20v24l-12 24-38 10v44l12-8v-34M620 40l-14 12 14 14M620 96l-12 26M606 150l-10 14M594 174l-34 14M558 190l10 8-8 8M558 210l10 8-8 10M710 18l-12 6-26 90 26-10V50l16-10 10-20M712 20l22 50-20-14h-14M702 60l14-24 20 34M672 114l26-60"/>
            <path class="e" d="M172 246l-12 138 22-14v-10M172 270l12 10v20l-12 6M172 310l10 8-10 10M172 334l10 8-10 10M172 358l10 8-10 10M184 290v14M265 246l-36 12 36 18 26-4-4-14zM265 246v66l-12 20 26-10v-40M229 258l48 30M265 250l22 38-34 44M265 256l28 8M240 256l36 34M280 250l-12 30M368 248l-24 18v56l14 10 86 10-76-94-10 84M368 248l78 94v14l-14 10-10 18M444 346l-10 10v14M434 370l-12 14M344 270l14-12"/>
            <path class="e" d="M550 258l-40 10-48 18 10 24 38-40 34 18 6 34v-76M550 260l-16 50 16 12M510 268l-24 30-26-8M474 296l76-38M622 256l24-10 40 10-38 96-40-10 6-22 36-10 8-30-10-42M646 248l12 46M646 248l-2 24 14 10M636 250l20 30M660 252v40l-20 20-30 26M614 318l28-6-32 22M652 252l-8 30"/>
            <path class="e" d="M38 402l-14 12 10 24 26 4 14-20-36-20M38 402l-4 36 16 60 12-14v-46M38 404l24 34M28 414l46 8M46 410l-8 30M36 420l20 50M168 402l-14 16 4 12 12-20zM154 424l-12 24M142 444l-40 40 2 32 26 24 26-88-14-8M142 446l-24 80M150 450l-28 80M136 452l-24 24"/>
            <path class="e" d="M215 402l-36 14-4 18 16 22 26 10 12 10-14-74v76l14-10M215 404l-24 50M215 404l14 66-10 14M179 430l36-26M215 480v30l12-10-10-14M314 402l-12 30-28 18 28-8v58M304 432l-4 50M314 402v20l-14 18M274 450l14 32 14-40M290 436l-4 60h14M300 500l-10 28 10-6v-20M288 504l12 8M402 402l-12 16-28 8v10l66 8v-42M402 404l-6 70 16 14-18-28M402 430l10 56M412 402l-12 38 28 4M428 402l-16 30M390 420l6 24 6-40M362 426l40-20"/>
            <path class="e" d="M495 402l-34 12v12l86 14-52-38zM495 402l52 44-38 42M461 424l80-2M461 426l48 60M495 404l28 78 24-36M500 406l10 80M490 406l-26 18 80 22M510 412l-8 40M568 402l14 12v24l36 8 26-34-36-10-26 14 60 14M608 402v44M608 404l24 36M644 412l-28 62v-30M582 430l26-26M618 408l-6 60M596 406l-10 30M612 474l-4 10 12 14M624 412l10 26"/>
            <path class="e" d="M18 558l-12 12 28 22-24 24-6 36M16 560l28 72M32 592l24 20-14 12M134 558l-38 12 64 8-26-20zM110 574l12 56-12 24-28 9M134 560l20 20-30 16 36-18M124 590l24 10-12-20M160 576l-12 28v16l-24 10M160 574l20 10 4 36h14M134 558l50 34M122 630l10 10M241 558l-14 14v14l12 12M241 558v94l-26-20 6-16 46-20v-24l-26-14M241 600l-22 28M241 640l24-30M266 576l-12 8v14l12 6M234 566l-8 20 14 4"/>
            <path class="e" d="M328 570v60l26-20v-52M356 558l-28 10M331 572v58M354 560l24 12-36-6M356 576l62 14-10 14-54 6M356 576l52 28M360 582l58 10M340 576l-12 50M342 586l24 20v-20l-22 20M358 580l40 18M328 570l50-4M500 558l-24 10 38 74M500 560l38 20v40l-24 22M500 562l24 70M480 568l48-4M500 560l38 60M500 568l24 18 14-8M488 568l36 60M500 562l24 34M590 558v20l14 10 50-28M592 574h52M604 586l24 24 28-50M616 558l-12 28M628 610v20l-12 34 24 8-10-40M632 624l8 8-14 6M618 650l20-12 2 32M622 652l18 18"/>
            <path class="e t" d="M358 578l58 14M590 560v24M500 562l26 50M40 404l-2 30M215 410v80M265 248v60M550 260v60M334 20v70M154 40l78 32"/>
            <path class="d" d="M620 20v90M472 44v62M172 250v110M344 268v54M698 50v50"/>
            <path class="e t" d="M132 716q6-3 12 0M372 716q18-4 34 0M714 716q16-3 30 0M42 714v4M228 716h4M282 716h4M322 714v4M524 714l6 4M562 714l4 4"/>
            <path class="r" d="M426 0h4M230 72h4M332 94h4M379 114h4M495 126h4M555 229h4M670 115h4M157 384h4M251 333h4M419 385h4M548 322h4M645 352h4M128 540h4M213 509h4M287 529h4M360 425h4M507 488h4M618 498h4M42 632h4M80 664h4M239 654h4M328 631h4M512 644h4M627 630h4"/>
          </g>
        </svg>
        <svg class="birdseye" viewBox="0 0 199 199" aria-label="Overview">
          <path d="M99 3v190" stroke="#f00" stroke-width="5" stroke-dasharray="1 3 2 4 1 2 1 5" stroke-opacity=".7"/>
          <path d="M99 4v100" stroke="#3a8a90" stroke-width="3" stroke-dasharray="1 5 1 3 1 7" stroke-opacity=".6"/>
          <path d="M98 20v120" stroke="#f00" stroke-width="2" stroke-dasharray="2 3 1 2 3 1"/>
          <path d="M101 10v120" stroke="#f00" stroke-width="2" stroke-dasharray="2 2 1 4 3 1"/>
          <path d="M99 55v75" stroke="#f00" stroke-width="5" stroke-dasharray="3 1 2 2 5 1"/>
          <path d="M98.500 115v80" stroke="#f00" stroke-width="5" stroke-dasharray="13 1 22 1"/>
        </svg>
      </div>
      <div class="viewbar">
        <div class="vb-group first"><button aria-label="Grid"><svg width="22" height="17" viewBox="0 0 22 17"><path d="M0 0h6v5H0zM8 0h6v5H8zM16 0h6v5h-6zM0 6h6v5H0zM8 6h6v5H8zM16 6h6v5h-6zM0 12h6v5H0zM8 12h6v5H8zM16 12h6v5h-6z"/></svg></button><button aria-label="View"><svg width="19" height="19" viewBox="0 0 19 19"><rect width="19" height="19" rx="3" fill="#73a4d4"/><use href="#share" x="3" y="3" width="13" height="13" color="#d9e4f0"/></svg></button></div>
        <div class="vb-group pop"><button aria-label="Detach"><svg width="19" height="19" viewBox="0 0 19 19"><rect width="19" height="19" rx="3"/><path d="M4 15l8-8" stroke="#fff" stroke-width="2.500"/><path d="M7 4h8v8z" fill="#fff"/></svg></button></div>
        <span class="vb-title">Androguard XGMML 1,000,000-Wallpapers-HD_v2.0pakage.apk</span>
        <div class="vb-group counts"><svg width="11" height="11" viewBox="0 0 11 11"><rect width="11" height="11" rx="2" fill="#8a8c91"/><path d="M2.500 5.500l2 2 4-4.500" fill="none" stroke="#fff" stroke-width="1.700"/></svg><span>0 - 0</span><i></i><svg class="gray" width="16" height="12"><use href="#eyeoff"/></svg><span>0 - 0</span></div>
        <div class="vb-group target"><button aria-label="Navigator"><svg width="19" height="19" viewBox="0 0 19 19"><circle cx="9.500" cy="9.500" r="6.500" fill="none" stroke="#73a4d4" stroke-width="2"/><path d="M9.500 0v6M9.500 13v6M0 9.500h6M13 9.500h6" stroke="#73a4d4" stroke-width="3"/></svg></button></div>
      </div>
      <div class="hsplit"><i></i></div>
      <div class="panel-head tp"><h2>Table Panel</h2><button aria-label="Float"><svg width="12" height="12"><use href="#float"/></svg></button><button aria-label="Close panel"><svg width="11" height="11"><use href="#close"/></svg></button></div>
      <div class="tabletools">
        <button aria-label="Options"><svg width="15" height="15"><use href="#gear"/></svg></button>
        <button aria-label="Columns"><svg width="19" height="18" viewBox="0 0 19 18"><path d="M.7.700h17.600v16.600H.7zM9.500 3v14" fill="none" stroke="#000" stroke-width="1.300"/><path d="M0 0h19v3H0z"/></svg></button>
        <button aria-label="Add column"><svg width="17" height="17" viewBox="0 0 17 17"><path d="M8.500 0v17M0 8.500h17" stroke="#000" stroke-width="4"/></svg></button>
        <button aria-label="Delete column"><svg width="17" height="19" viewBox="0 0 17 19"><path d="M0 4h17M5 4V1h7v3M2.500 4v14h12V4" fill="none" stroke="#000" stroke-width="1.800"/><path d="M6 7v8M8.500 7v8M11 7v8" stroke="#000" stroke-width="1.300"/></svg></button>
        <button aria-label="Delete table"><svg class="gray" width="19" height="10" viewBox="0 0 19 10"><path d="M.5 1h10v8H.5zM.5 3.700h10M.5 6.300h10M4 1v8M7.500 1v8" fill="none" stroke="currentColor"/><circle cx="14.500" cy="5" r="4.500" fill="currentColor"/><path d="M12.700 3.200l3.600 3.600M16.300 3.200l-3.600 3.600" stroke="#d6d9df" stroke-width="1.400"/></svg></button>
        <button class="fx">f(x)</button>
      </div>
      <div class="tablewrap">
        <div class="tablescroll">
        <table>
          <colgroup><col class="c1"><col class="c2"><col class="c3"><col class="c4"><col class="c5"><col class="c6"></colgroup>
          <thead><tr>
            <th><div><svg><use href="#tree"/></svg><span>shared name</span></div></th>
            <th><div><span>name</span></div></th>
            <th><div><svg><use href="#tree"/></svg><span>classname</span></div></th>
            <th><div><svg><use href="#tree"/></svg><span>descriptor</span></div></th>
            <th><div><svg><use href="#tree"/></svg><span>offset</span></div></th>
            <th><div><svg><use href="#tree"/></svg><span>node.label</span></div></th>
          </tr></thead>
          <tbody>
            <tr><td>&lt;init&gt;</td><td>&lt;init&gt;</td><td>Landroid/support/...</td><td>()V</td><td>0</td><td>&lt;init&gt;return-void</td></tr>
            <tr><td>&lt;init&gt;</td><td>&lt;init&gt;</td><td>Landroid/support/...</td><td>()V</td><td>0</td><td>&lt;init&gt;return-void</td></tr>
            <tr><td>access$100</td><td>access$100</td><td>Landroid/support/...</td><td>(Ljava/lang/Class...</td><td>0</td><td>access$100retur...</td></tr>
            <tr><td>install</td><td>install</td><td>Landroid/support/...</td><td>(Ljava/lang/Class...</td><td>0</td><td>installreturn-void</td></tr>
            <tr><td>makeDexElements</td><td>makeDexE...</td><td>Landroid/support/...</td><td>(Ljava/lang/Objec...</td><td>0</td><td>makeDexElement...</td></tr>
            <tr><td>&lt;init&gt;</td><td>&lt;init&gt;</td><td>Landroid/support/...</td><td>()V</td><td>0</td><td>&lt;init&gt;return-void</td></tr>
            <tr><td>access$000</td><td>access$000</td><td>Landroid/support/...</td><td>(Ljava/lang/Class...</td><td>0</td><td>access$000retur...</td></tr>
            <tr><td>install</td><td>install</td><td>Landroid/support/...</td><td>(Ljava/lang/Class...</td><td>0</td><td>installif-lez</td></tr>
            <tr><td>install</td><td>install</td><td>Landroid/support/...</td><td>(Ljava/lang/Class...</td><td>70</td><td>0x46move-result-...</td></tr>
            <tr><td>install</td><td>install</td><td>Landroid/support/...</td><td>(Ljava/lang/Class...</td><td>78</td><td>0x4eif-eqz</td></tr>
          </tbody>
        </table>
        </div>
        <div class="scroll"><div class="corner"></div><button aria-label="Scroll up"><svg width="7" height="8" viewBox="0 0 7 8"><path d="M0 8l3.500-8L7 8z" fill="#333"/></svg></button><div class="track"><i></i></div><button aria-label="Scroll down"><svg width="7" height="8" viewBox="0 0 7 8"><path d="M0 0l3.500 8L7 0z" fill="#333"/></svg></button></div>
      </div>
      <div class="tabstrip"></div>
      <div class="tabs bottom"><button class="on">Node Table</button><button>Edge Table</button><button>Network Table</button></div>
    </section>
  </div>
  <footer class="status">
    <button class="nb cloud" aria-label="Cloud"><svg width="16" height="12" viewBox="0 0 16 12"><path d="M4 12q-4 0-4-3.500Q0 6 2 5q0-4 5-5q4 0 5 3q2 0 2 3q2 0 2 3t-3 3z"/></svg></button>
    <button class="tasks" aria-label="Tasks"><svg width="14" height="11" viewBox="0 0 14 11"><path d="M0 1h2M0 5.500h2M0 10h2M4 1h10M4 5.500h10M4 10h10" stroke="#222" stroke-width="2"/></svg></button>
    <button class="nb memory"><i></i>Memory</button>
  </footer>
</div>
</div>
</body>
</html>
```

FILE: styles.css
```css
* { box-sizing: border-box; }
html, body { height: 100%; }
body {
  margin: 0;
  display: flex;
  flex-direction: column;
  overflow: hidden;
  font: 11px/16px "DejaVu Sans", sans-serif;
  color: #000;
  background: #6a2262;
}
h1, h2 { margin: 0; font: inherit; }
button { font: inherit; color: inherit; border: 0; background: none; padding: 0; }
svg { display: block; flex: none; }
.defs { position: absolute; width: 0; height: 0; }
.navy { color: #033f63; }
.gray { color: #8c8d90; }

.topbar {
  height: 24px;
  flex: none;
  display: flex;
  align-items: center;
  justify-content: space-between;
  padding: 0 8px 0 6px;
  background: linear-gradient(#5a5850, #403f3a);
  color: #dfdbd2;
  font: 14px/24px "Noto Sans", sans-serif;
}
.app-name { font: 600 15px/24px "Open Sans", sans-serif; }
.indicators { display: flex; align-items: center; gap: 14px; }
.lang { width: 20px; height: 20px; border-radius: 2px; background: #dfdbd2; color: #45443f; font-size: 13px; line-height: 20px; text-align: center; }

.desktop {
  flex: 1;
  min-height: 0;
  display: flex;
  background: linear-gradient(100deg, #6a2262 0, #6a2262 50%, transparent 51%), linear-gradient(#c5492b 0, #bb4331 45%, #a63b40 68%, #8b2f55 100%);
}
.launcher {
  width: 65px;
  display: flex;
  flex-direction: column;
  align-items: flex-start;
  gap: 7px;
  padding: 6px;
  background: #631153;
  border-right: 1px solid #86477a;
}
.tile {
  position: relative;
  width: 52px;
  height: 52px;
  flex: none;
  border-radius: 4px;
  border: 1px solid #85487a;
  background: radial-gradient(ellipse at 50% 0, #b58bac 0, #8a4c7c 35%, transparent 70%), #6d2260;
  box-shadow: 0 1px 3px #3a0a30;
}
.tile svg { width: 52px; height: 52px; margin: -1px; overflow: visible; }
.dash { background: radial-gradient(circle at 50% 20%, #c05aa5, #a02a86 60%, #83156d); border-color: #c070ae; }
.active { background: linear-gradient(#c09070, #b0683c 50%, #b4703f); border-color: #d89a60; }
.active::before, .active::after {
  content: "";
  position: absolute;
  top: 20px;
  border: 4px solid transparent;
}
.active::before { left: -7px; border-left: 5px solid #ddd; border-right: 0; }
.active::after { right: -7px; border-right: 5px solid #ddd; border-left: 0; }
.trash { margin-top: auto; }
.amazon { font: bold 38px "Open Sans", sans-serif; fill: #222; }

.window {
  flex: 1;
  min-width: 0;
  margin: 0 38px 0 37px;
  display: flex;
  flex-direction: column;
  background: #d6d9df;
  border-radius: 6px 6px 0 0;
  box-shadow: 0 4px 22px 4px rgba(0, 0, 0, .55);
}
.titlebar {
  height: 28px;
  flex: none;
  display: flex;
  align-items: center;
  gap: 3px;
  padding: 0 7px;
  border-radius: 6px 6px 0 0;
  background: linear-gradient(#5a5850, #403f3a);
  color: #dfdbd2;
}
.titlebar h1 { margin-left: 9px; font: 600 15px/28px "Open Sans", sans-serif; }
.wb { width: 16px; height: 16px; border-radius: 50%; background: #7c7a72; box-shadow: 0 0 0 1px #3a3934 inset; }
.wb path { fill: none; stroke: #3a3934; stroke-width: 1.2; }
.wb-close { background: #ee5f33; }
.menubar {
  height: 23px;
  flex: none;
  display: flex;
  align-items: center;
  gap: 9px;
  padding: 0 10px;
  border-bottom: 1px solid #9297a1;
  background: linear-gradient(#fff 20%, #d6d9df 85%);
  font-size: 12px;
}
.toolbar {
  height: 41px;
  flex: none;
  display: flex;
  align-items: center;
  padding: 0 8px;
  border-bottom: 1px solid #000;
}
.toolbar button, .toolbar svg { width: 40px; height: 40px; flex: none; }
.sep { width: 10px; height: 38px; flex: none; background: linear-gradient(#94979e 1px, transparent 1px) 5px 0 / 1px 3px repeat-y; }
.lens { fill: none; stroke: currentColor; stroke-width: 2; }
.handle { stroke: currentColor; stroke-width: 3.5; }
.search {
  width: 236px;
  height: 22px;
  margin-left: 22px;
  padding: 0 3px;
  border: 1px solid #b9bcc2;
  border-top-color: #7c7f86;
  box-shadow: inset 0 1px 1px #c9c9c9;
  background: #fff;
  font: 11px "DejaVu Sans", sans-serif;
  color: #000;
}

.work { flex: 1; min-height: 0; display: flex; }
.control { width: 398px; flex: none; display: flex; flex-direction: column; padding: 0 0 2px 2px; }
.panel-head { display: flex; align-items: center; gap: 6px; height: 28px; flex: none; padding: 1px 9px 0 11px; }
.panel-head h2 { flex: 1; }
.tabs { display: flex; height: 26px; flex: none; align-items: flex-start; padding: 3px 8px 0; font-size: 12px; }
.tabs button {
  height: 22px;
  padding: 0 7px;
  border: 1px solid #55585f;
  border-bottom: 1px solid #10131c;
  border-radius: 5px 5px 0 0;
  background: linear-gradient(#f4f5f7, #d6d9df 50%, #e4e6ea);
}
.tabs button.on { background: linear-gradient(#c5d0de, #9eb4cb); border-color: #2b3542; border-bottom-color: #9eb4cb; }
.selbar { display: flex; align-items: center; gap: 7px; height: 24px; flex: none; padding: 0 4px 0 5px; }
.selbar span { flex: 1; text-align: center; }
.nets { flex: 1; border: 1px solid #9297a1; background: #fff; }
.net { display: flex; align-items: center; height: 23px; padding: 1px 6px 0 10px; gap: 10px; white-space: nowrap; }
.net .nm { flex: 1; }
.net .ct { color: #8c8d90; margin-left: 2px; }
.root { border-bottom: 1px solid #dadce0; height: 24px; }
.root .ct { margin-left: -6px; }
.child { background: #d9e5ef; border-bottom: 1px solid #9297a1; padding-left: 6px; gap: 7px; }
.child .dot { width: 9px; height: 9px; border-radius: 50%; background: #73a4d4; margin-right: 16px; }
.child .nm { margin-right: -9px; }
.child .ct { margin-left: 5px; }

.vsplit { width: 6px; flex: none; display: flex; align-items: center; justify-content: center; }
.vsplit i { width: 4px; height: 17px; border: 1px solid #9297a1; border-radius: 2px; }
.main { flex: 1; min-width: 0; display: flex; flex-direction: column; border-left: 1px solid #b9bcc4; }
.canvas { flex: 1; min-height: 0; position: relative; background: #fff; border-right: 1px solid #9297a1; border-left: 1px solid #9297a1; margin-left: -1px; }
.graph { width: 100%; height: 100%; overflow: hidden; }
.e { fill: none; stroke: #1616dc; stroke-opacity: .72; stroke-width: 2.6; }
.t { stroke-width: 3.2; stroke-opacity: .85; }
.w { fill: #1616dc; fill-opacity: .3; }
.d { fill: none; stroke: #1616dc; stroke-width: 3; stroke-opacity: .8; stroke-dasharray: 9 4; }
.r { fill: none; stroke: #ff3030; stroke-width: 4; }
.birdseye { position: absolute; right: 0; bottom: 0; width: 199px; height: 199px; background: #fff; border: 1px solid #6fa0cc; }

.viewbar { height: 30px; flex: none; display: flex; align-items: center; border: 1px solid #9297a1; border-width: 1px 1px 1px 0; }
.vb-group { height: 100%; display: flex; align-items: center; gap: 10px; }
.first { width: 75px; padding-left: 11px; }
.pop { width: 43px; justify-content: center; border: 1px solid #b0b3ba; border-width: 0 1px; }
.vb-title { flex: 1; padding-left: 6px; }
.counts { color: #8c8d90; gap: 6px; padding: 0 14px 0 13px; border-left: 1px solid #a4a8b0; }
.counts i { width: 1px; height: 16px; background: #a4a8b0; }
.target { width: 32px; justify-content: center; border-left: 1px solid #a4a8b0; }
.hsplit { height: 4px; flex: none; display: flex; justify-content: center; border-bottom: 1px solid #cccfd6; }
.hsplit i { width: 18px; height: 3px; border: 1px solid #9297a1; border-bottom-color: #fff; border-radius: 2px; }
.tp { padding-right: 11px; }
.tabletools { height: 38px; flex: none; display: flex; align-items: flex-start; gap: 4px; margin-left: -1px; border-bottom: 1px solid #9297a1; }
.tabletools button { width: 34px; height: 30px; display: flex; align-items: center; justify-content: center; }
.tabletools .fx { width: 36px; font: italic 17px "DejaVu Serif", serif; color: #8c8d90; }

.tablewrap { height: 175px; flex: none; display: flex; margin: 2px 2px 0 1px; border: 1px solid #9297a1; }
.tablescroll { flex: 1; min-width: 0; overflow: hidden; }
table { border-collapse: separate; border-spacing: 0; table-layout: fixed; width: 729px; }
.c1 { width: 148px; } .c2 { width: 88px; } .c3 { width: 132px; } .c4 { width: 129px; } .c5 { width: 101px; } .c6 { width: 131px; }
th { height: 24px; padding: 0; border: 1px solid #9297a1; border-width: 0 1px 1px 0; font-weight: normal; font-size: 12px; }
th div { display: flex; padding: 0 16px 0 4px; align-items: center; }
th svg { width: 12px; height: 11px; margin-bottom: 4px; }
th span { flex: 1; text-align: center; }
td { height: 16px; line-height: 14px; padding: 2px 8px 0; background: #fff; white-space: nowrap; overflow: hidden; }
td:nth-child(5) { text-align: right; }
.scroll { width: 15px; flex: none; display: flex; flex-direction: column; background: linear-gradient(90deg, #b9bcc2, #d0d2d8 50%, #c8cad0); }
.corner { height: 24px; flex: none; background: linear-gradient(#e8e9ed, #d6d9df 50%, #f4f4f6); border-bottom: 1px solid #9297a1; }
.scroll button { height: 16px; flex: none; display: flex; align-items: center; justify-content: center; background: linear-gradient(90deg, #dcdee3, #f2f3f5); border-left: 1px solid #9297a1; }
.track { flex: 1; overflow: hidden; border-bottom: 2px solid #555; border-radius: 0 0 8px 0; }
.track i { display: block; width: 14px; height: 29px; border: 1px solid #2f4a66; border-left: 0; border-radius: 0 14px 14px 0; background: linear-gradient(90deg, #8fa9c2, #e4edf5 25%, #a9c0d6 50%, #dfe9f3); }
.tabstrip { height: 5px; flex: none; margin-top: 2px; border-top: 1px solid #000; border-bottom: 1px solid #5e7287; background: #b6c9dc; }
.bottom { height: 24px; padding: 0 9px; }
.bottom button { border-radius: 0 0 5px 5px; height: 21px; padding: 0 9px; border: 1px solid #55585f; border-bottom-color: #10131c; border-top: 0; }

.status { height: 28px; flex: none; display: flex; align-items: center; padding: 0 8px; border-top: 1px solid #9297a1; }
.nb {
  height: 23px;
  display: flex;
  align-items: center;
  justify-content: center;
  gap: 5px;
  border: 1px solid #7a7d84;
  border-radius: 5px;
  background: linear-gradient(#fff, #dcdfe4 50%, #f2f3f5);
}
.cloud { width: 39px; }
.tasks { width: 48px; height: 25px; margin-left: 10px; display: flex; align-items: center; justify-content: center; background: #eee; border: 1px solid #7a8a99; }
.memory { width: 87px; margin-left: auto; }
.memory i { width: 12px; height: 12px; border-radius: 50%; background: #0c8f36; }
```
